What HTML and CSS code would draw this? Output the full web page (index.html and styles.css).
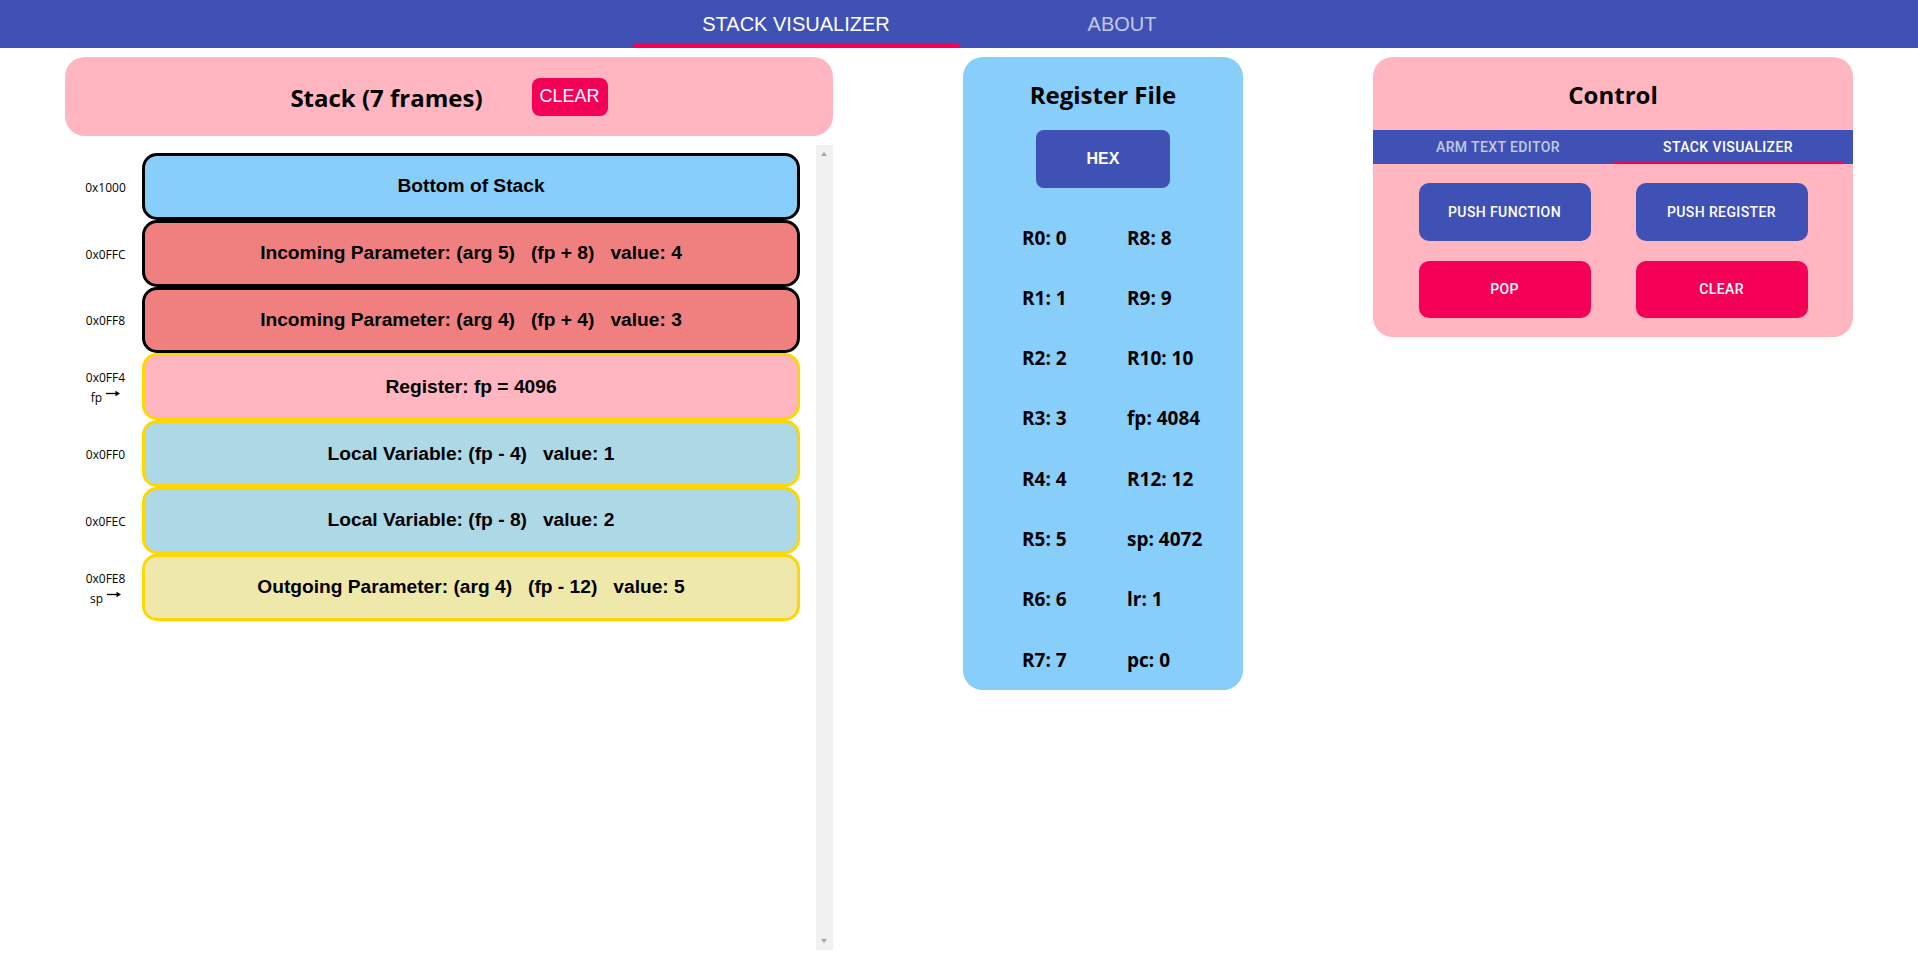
FILE: index.html
```html
<!DOCTYPE html>
<html lang="en">
<head>
<meta charset="utf-8">
<title>Stack Visualizer</title>
<link rel="stylesheet" href="styles.css">
</head>
<body>
<nav class="topnav">
  <div class="nav-tabs">
    <button class="nav-tab active">STACK VISUALIZER</button>
    <button class="nav-tab">ABOUT</button>
  </div>
</nav>

<main class="main">
  <section class="stack-col">
    <div class="stack-header">
      <h2 class="stack-title">Stack (7 frames)</h2>
      <button class="clear-btn">CLEAR</button>
    </div>
    <div class="stack-body">
      <div class="frames">
        <div class="frame-row">
          <div class="addr"><span>0x1000</span></div>
          <div class="frame f-bottom">Bottom of Stack</div>
        </div>
        <div class="frame-row">
          <div class="addr"><span>0x0FFC</span></div>
          <div class="frame f-incoming">Incoming Parameter: (arg 5)&nbsp;&nbsp;&nbsp;(fp + 8)&nbsp;&nbsp;&nbsp;value: 4</div>
        </div>
        <div class="frame-row">
          <div class="addr"><span>0x0FF8</span></div>
          <div class="frame f-incoming">Incoming Parameter: (arg 4)&nbsp;&nbsp;&nbsp;(fp + 4)&nbsp;&nbsp;&nbsp;value: 3</div>
        </div>
        <div class="frame-row">
          <div class="addr"><span>0x0FF4</span><span class="ptr">fp <svg class="arrow" viewBox="0 0 14 7" width="14" height="7"><path d="M0 3.5H11" stroke="#000" stroke-width="1.3"/><path d="M9.5 0.8L14 3.5L9.5 6.2Z" fill="#000"/></svg></span></div>
          <div class="frame f-register">Register: fp = 4096</div>
        </div>
        <div class="frame-row">
          <div class="addr"><span>0x0FF0</span></div>
          <div class="frame f-local">Local Variable: (fp - 4)&nbsp;&nbsp;&nbsp;value: 1</div>
        </div>
        <div class="frame-row">
          <div class="addr"><span>0x0FEC</span></div>
          <div class="frame f-local">Local Variable: (fp - 8)&nbsp;&nbsp;&nbsp;value: 2</div>
        </div>
        <div class="frame-row">
          <div class="addr"><span>0x0FE8</span><span class="ptr">sp <svg class="arrow" viewBox="0 0 14 7" width="14" height="7"><path d="M0 3.5H11" stroke="#000" stroke-width="1.3"/><path d="M9.5 0.8L14 3.5L9.5 6.2Z" fill="#000"/></svg></span></div>
          <div class="frame f-outgoing">Outgoing Parameter: (arg 4)&nbsp;&nbsp;&nbsp;(fp - 12)&nbsp;&nbsp;&nbsp;value: 5</div>
        </div>
      </div>
      <div class="scrolltrack"><span class="arr-up"></span><span class="arr-down"></span></div>
    </div>
  </section>

  <section class="regfile">
    <h2 class="panel-title">Register File</h2>
    <button class="hex-btn">HEX</button>
    <div class="regs">
      <div class="reg">R0: 0</div>
      <div class="reg">R1: 1</div>
      <div class="reg">R2: 2</div>
      <div class="reg">R3: 3</div>
      <div class="reg">R4: 4</div>
      <div class="reg">R5: 5</div>
      <div class="reg">R6: 6</div>
      <div class="reg">R7: 7</div>
      <div class="reg">R8: 8</div>
      <div class="reg">R9: 9</div>
      <div class="reg">R10: 10</div>
      <div class="reg">fp: 4084</div>
      <div class="reg">R12: 12</div>
      <div class="reg">sp: 4072</div>
      <div class="reg">lr: 1</div>
      <div class="reg">pc: 0</div>
    </div>
  </section>

  <section class="control">
    <h2 class="panel-title">Control</h2>
    <div class="ctl-tabs">
      <button class="ctl-tab">ARM TEXT EDITOR</button>
      <button class="ctl-tab active">STACK VISUALIZER</button>
    </div>
    <div class="ctl-buttons">
      <button class="ctl-btn primary">PUSH FUNCTION</button>
      <button class="ctl-btn primary">PUSH REGISTER</button>
      <button class="ctl-btn secondary">POP</button>
      <button class="ctl-btn secondary">CLEAR</button>
    </div>
  </section>
</main>
</body>
</html>
```

FILE: styles.css
```css
* { box-sizing: border-box; }

html, body {
  margin: 0;
  padding: 0;
  background: #fff;
  overflow: hidden;
  font-family: "Open Sans", "Noto Sans", sans-serif;
  color: #000;
}

button {
  cursor: pointer;
  border: 0;
  margin: 0;
  padding: 0;
}

/* ---------- top navigation ---------- */
.topnav {
  height: 48px;
  background: #3f51b5;
  display: flex;
  justify-content: center;
}

.nav-tabs {
  display: flex;
}

.nav-tab {
  position: relative;
  width: 326px;
  height: 48px;
  background: transparent;
  font-family: "Liberation Sans", Arial, sans-serif;
  font-size: 20px;
  color: rgba(255, 255, 255, 0.7);
}

.nav-tab.active {
  color: #fff;
}

.nav-tab.active::after {
  content: "";
  position: absolute;
  left: 0;
  right: 0;
  bottom: 0;
  height: 5px;
  background: #f50057;
}

/* ---------- main layout ---------- */
.main {
  display: flex;
  justify-content: space-around;
  align-items: flex-start;
  padding-top: 9px;
}

/* ---------- stack column ---------- */
.stack-col {
  width: 768px;
}

.stack-header {
  height: 79px;
  background: #ffb6c1;
  border-radius: 20px;
  display: flex;
  align-items: center;
  justify-content: center;
  gap: 49px;
}

.stack-title {
  margin: 0;
  padding-top: 3px;
  font-size: 24px;
  font-weight: 700;
  line-height: 32px;
}

.clear-btn {
  height: 38px;
  padding: 0 8px;
  border-radius: 8px;
  background: #f50057;
  color: #fff;
  font-family: "Liberation Sans", Arial, sans-serif;
  font-size: 18px;
}

.stack-body {
  margin-top: 9px;
  height: 805px;
  display: flex;
}

.frames {
  flex: 1;
  padding-top: 8px;
}

.frame-row {
  display: flex;
  height: 66.8px;
}

.addr {
  width: 77px;
  padding-left: 4px;
  padding-top: 3px;
  display: flex;
  flex-direction: column;
  align-items: center;
  justify-content: center;
  font-size: 12px;
  line-height: 20px;
}

.ptr {
  white-space: nowrap;
}

.arrow {
  display: inline-block;
  vertical-align: 5px;
  margin-left: 1px;
}

.frame {
  flex: 1;
  margin-right: 16px;
  border: 3px solid #000;
  border-radius: 15px;
  display: flex;
  align-items: center;
  justify-content: center;
  font-family: "Liberation Sans", Arial, sans-serif;
  font-weight: 700;
  font-size: 19.2px;
  white-space: nowrap;
}

.f-bottom { background: #87cefa; }
.f-incoming { background: #f08080; }
.f-register { background: #ffb6c1; border-color: #ffd700; }
.f-local { background: #add8e6; border-color: #ffd700; }
.f-outgoing { background: #eee8aa; border-color: #ffd700; }

.scrolltrack {
  position: relative;
  width: 17px;
  background: #f1f1f1;
}

.arr-up,
.arr-down {
  position: absolute;
  left: 5px;
  width: 0;
  height: 0;
  border-left: 3.5px solid transparent;
  border-right: 3.5px solid transparent;
}

.arr-up {
  top: 7px;
  border-bottom: 4px solid #a3a3a3;
}

.arr-down {
  bottom: 7px;
  border-top: 4px solid #a3a3a3;
}

/* ---------- panels ---------- */
.panel-title {
  margin: 0;
  padding-top: 21.5px;
  font-size: 24px;
  font-weight: 700;
  line-height: 32px;
  text-align: center;
}

.regfile {
  width: 280px;
  background: #87cefa;
  border-radius: 20px;
  display: flex;
  flex-direction: column;
  align-items: center;
}

.hex-btn {
  margin-top: 19px;
  width: 134px;
  height: 58px;
  border-radius: 8px;
  background: #3f51b5;
  color: #fff;
  font-family: "Liberation Sans", Arial, sans-serif;
  font-weight: 700;
  font-size: 16px;
}

.regs {
  align-self: stretch;
  margin-top: 20px;
  padding-left: 59px;
  display: grid;
  grid-auto-flow: column;
  grid-template-rows: repeat(8, 60.3px);
  grid-template-columns: 105px auto;
}

.reg {
  font-size: 19px;
  font-weight: 700;
  line-height: 60.3px;
  white-space: nowrap;
}

.control {
  width: 480px;
  background: #ffb6c1;
  border-radius: 20px;
  padding-bottom: 19px;
}

.ctl-tabs {
  margin-top: 19px;
  height: 34px;
  padding: 0 10px;
  background: #3f51b5;
  display: flex;
}

.ctl-tab {
  position: relative;
  width: 230px;
  height: 34px;
  background: transparent;
  font-family: Roboto, "Liberation Sans", sans-serif;
  font-weight: 500;
  font-size: 14px;
  letter-spacing: 0.4px;
  color: rgba(255, 255, 255, 0.7);
}

.ctl-tab.active {
  color: #fff;
}

.ctl-tab.active::after {
  content: "";
  position: absolute;
  left: 0;
  right: 0;
  bottom: 0;
  height: 2px;
  background: #f50057;
}

.ctl-buttons {
  margin-top: 19.5px;
  display: grid;
  grid-template-columns: 172px 172px;
  grid-auto-rows: 57.5px;
  column-gap: 45px;
  row-gap: 20px;
  justify-content: center;
}

.ctl-btn {
  border-radius: 10px;
  color: #fff;
  font-family: Roboto, "Liberation Sans", sans-serif;
  font-weight: 500;
  font-size: 14px;
  letter-spacing: 0.4px;
}

.ctl-btn.primary { background: #3f51b5; }
.ctl-btn.secondary { background: #f50057; }
```
